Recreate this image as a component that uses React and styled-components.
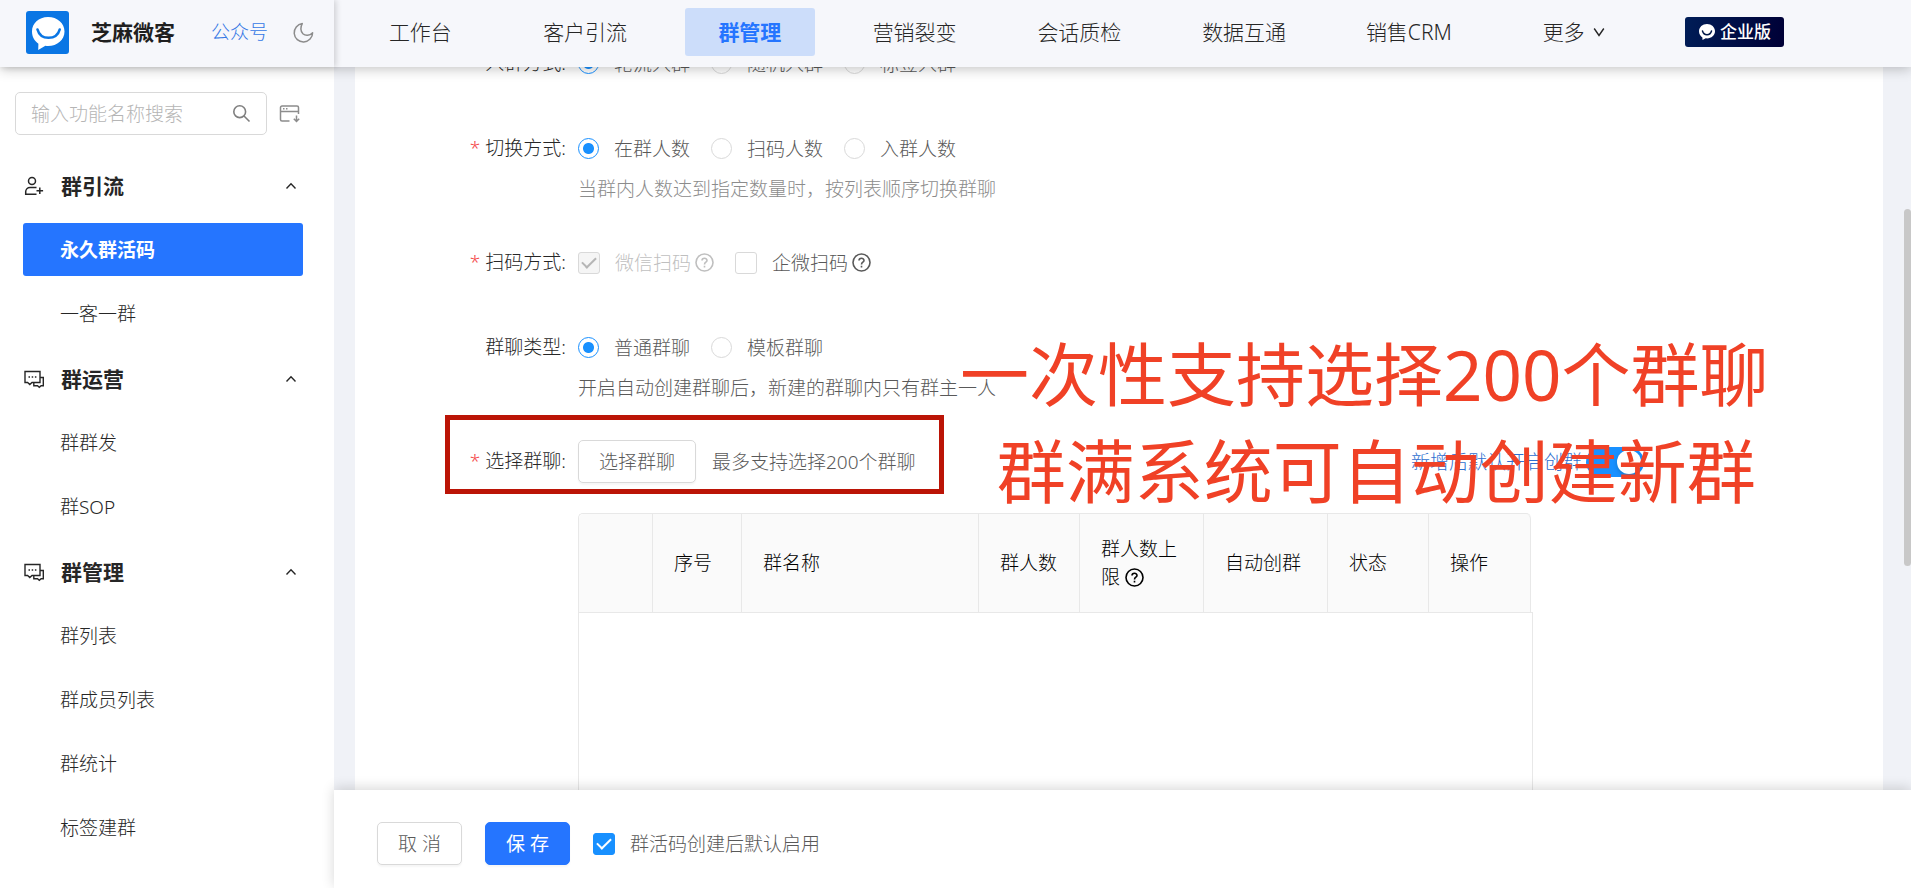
import React, { useState } from "react";
import styled, { createGlobalStyle, css } from 'styled-components'

const GlobalStyle = createGlobalStyle`
  * {
    box-sizing: border-box;
  }
  body {
    margin: 0;
    font-family: "Noto Sans", "Noto Sans CJK SC", sans-serif;
    font-size: 19px;
    font-weight: 300;
    line-height: 28px;
    color: #595959;
    background: #f0f2f7;
  }
  button, input {
    font: inherit;
    color: inherit;
  }
  a {
    color: inherit;
    text-decoration: none;
  }
`

const Page = styled.div`
  display: flex;
  flex-direction: column;
  height: 100vh;
  overflow: hidden;
`

/* ---------- top bar ---------- */

const Header = styled.header`
  display: flex;
  flex: none;
  height: 67px;
  position: relative;
  z-index: 2;
  background: #f6f7fb;
  box-shadow: 0 2px 12px rgba(0, 0, 0, 0.24);
`
const Brand = styled.div`
  display: flex;
  align-items: center;
  flex: 0 0 334px;
  padding: 0 20px 3px 26px;
  box-shadow: 2px 0 6px rgba(0, 0, 0, 0.16);
`
const BrandName = styled.strong`
  margin-left: 22px;
  font-size: 21px;
  font-weight: 700;
  color: #1f1f1f;
`
const AccountLink = styled.a`
  margin: 0 25px 0 36px;
  color: #3478e5;
`
const IconButton = styled.button`
  display: flex;
  padding: 0;
  border: 0;
  background: none;
  color: #8c8c8c;
  cursor: pointer;
`
const Nav = styled.nav`
  display: grid;
  grid-template-columns: repeat(8, 1fr);
  align-items: center;
  flex: 1;
  padding: 0 4px;
`
const NavLink = styled.a`
  display: flex;
  align-items: center;
  justify-content: center;
  gap: 8px;
  height: 48px;
  margin: 0 17px 3px;
  border-radius: 3px;
  font-size: 21px;
  white-space: nowrap;
  color: #262626;
  ${({ $active }) => $active && css`
    background: #ccddfa;
    color: #2575ff;
    font-weight: 700;
  `}
`
const HeaderEnd = styled.div`
  display: flex;
  align-items: center;
  flex: 0 0 251px;
  padding: 0 0 3px 25px;
`
const Edition = styled.span`
  display: flex;
  align-items: center;
  justify-content: center;
  gap: 4px;
  width: 99px;
  height: 30px;
  border-radius: 3px;
  background: linear-gradient(100deg, #001d57, #000036);
  color: #fff;
  font-size: 17px;
  font-weight: 500;
`

/* ---------- sidebar ---------- */

const Body = styled.div`
  display: flex;
  flex: 1;
  min-height: 0;
`
const Sidebar = styled.aside`
  flex: 0 0 334px;
  overflow: hidden;
  background: #fff;
`
const SearchRow = styled.div`
  display: flex;
  align-items: center;
  gap: 12px;
  padding: 25px 0 18px 15px;
`
const SearchBox = styled.label`
  display: flex;
  align-items: center;
  width: 252px;
  height: 43px;
  padding: 0 15px;
  border: 1px solid #d9d9d9;
  border-radius: 5px;
  color: #7f7f7f;
`
const SearchInput = styled.input`
  flex: 1;
  min-width: 0;
  padding: 0;
  border: 0;
  outline: 0;
  background: none;
  &::placeholder {
    color: #b5b5b5;
    opacity: 1;
  }
`
const GroupTitle = styled.button`
  display: flex;
  align-items: center;
  width: 100%;
  height: 65px;
  padding: 0 37px 0 24px;
  border: 0;
  background: none;
  font-size: 21px;
  font-weight: 700;
  color: #262626;
  cursor: pointer;
  span {
    flex: 1;
    margin-left: 17px;
    text-align: left;
  }
`
const MenuList = styled.div`
  display: grid;
  gap: 11px;
  padding: 5px 31px 6px 23px;
`
const MenuLink = styled.a`
  display: flex;
  align-items: center;
  height: 53px;
  padding-left: 37px;
  border-radius: 3px;
  color: #262626;
  ${({ $active }) => $active && css`
    background: #2575ff;
    color: #fff;
    font-weight: 700;
  `}
`

/* ---------- form ---------- */

const Main = styled.main`
  display: flex;
  flex-direction: column;
  flex: 1;
  min-width: 0;
  position: relative;
`
const Scroller = styled.div`
  flex: 1;
  min-height: 0;
  padding: 0 28px 0 21px;
  overflow: hidden;
`
const Card = styled.form`
  display: flow-root;
  position: relative;
  min-height: 100%;
  background: #fff;
`
/* the form is scrolled, so its first row is half under the top bar */
const Rows = styled.div`
  margin-top: -25px;
`
const Row = styled.div`
  display: flex;
  margin-bottom: ${({ $hinted }) => ($hinted ? 33 : 42)}px;
`
const RowLabel = styled.div`
  flex: 0 0 223px;
  padding-right: 12px;
  line-height: 43px;
  text-align: right;
  color: #262626;
`
const Star = styled.span`
  margin-right: 5px;
  color: #f5484c;
`
const Control = styled.div`
  flex: 1;
  min-width: 0;
`
const Line = styled.div`
  display: flex;
  align-items: center;
  height: 43px;
  gap: ${({ $gap }) => $gap || 21}px;
`
const Hint = styled.div`
  line-height: 38px;
  color: ${({ $dark }) => ($dark ? '#595959' : '#8c8c8c')};
`
const Choice = styled.label`
  display: flex;
  align-items: center;
  gap: 15px;
  white-space: nowrap;
  color: ${({ $disabled }) => ($disabled ? '#bfbfbf' : 'inherit')};
`
const WithHelp = styled.span`
  display: flex;
  align-items: center;
  gap: 4px;
`
const Radio = styled.input.attrs({ type: 'radio' })`
  appearance: none;
  width: 21px;
  height: 21px;
  margin: 0;
  border: 1px solid #d9d9d9;
  border-radius: 50%;
  background: #fff;
  &:checked {
    border-color: #1890ff;
    background: radial-gradient(circle, #1890ff 5px, #fff 6px);
  }
`
const Tick = styled.input.attrs({ type: 'checkbox' })`
  appearance: none;
  display: grid;
  place-items: center;
  width: 22px;
  height: 22px;
  margin: 0;
  border: 1px solid #d9d9d9;
  border-radius: 3px;
  background: #fff;
  &:checked::after {
    content: "";
    width: 6px;
    height: 12px;
    margin-top: -3px;
    border: solid #fff;
    border-width: 0 2px 2px 0;
    transform: rotate(45deg);
  }
  &:checked {
    border-color: #1890ff;
    background: #1890ff;
  }
  &:disabled {
    border-color: #d9d9d9;
    background: #f5f5f5;
  }
  &:disabled::after {
    border-color: #b5b5b5;
  }
`
const Button = styled.button`
  height: 43px;
  padding: 0 20px;
  border: 1px solid ${({ $primary }) => ($primary ? '#2575ff' : '#d9d9d9')};
  border-radius: 5px;
  background: ${({ $primary }) => ($primary ? '#2575ff' : '#fff')};
  color: ${({ $primary }) => ($primary ? '#fff' : '#595959')};
  font-weight: ${({ $primary }) => ($primary ? 400 : 300)};
  box-shadow: 0 2px 2px rgba(0, 0, 0, 0.04);
  white-space: nowrap;
  cursor: pointer;
`
const PickLine = styled(Line)`
  max-width: 1066px;
`
const AutoCreate = styled.label`
  display: flex;
  align-items: center;
  gap: 4px;
  margin-left: auto;
  color: #2f6fd0;
`
const Switch = styled.input.attrs({ type: 'checkbox', role: 'switch' })`
  appearance: none;
  display: flex;
  align-items: center;
  width: 58px;
  height: 30px;
  margin: 0;
  padding: 0 3px;
  border-radius: 15px;
  background: #bfbfbf;
  &::after {
    content: "";
    width: 24px;
    height: 24px;
    border-radius: 50%;
    background: #fff;
    box-shadow: 0 2px 4px rgba(0, 35, 11, 0.2);
  }
  &:checked {
    justify-content: flex-end;
    background: #1890ff;
  }
`

/* ---------- table ---------- */

const TableBox = styled.div`
  max-width: 955px;
  margin-top: 30px;
`
const Table = styled.table`
  width: calc(100% - 3px);
  table-layout: fixed;
  border-collapse: separate;
  border-spacing: 0;
  border-top: 1px solid #e8e8e8;
  border-left: 1px solid #e8e8e8;
  border-radius: 5px 5px 0 0;
`
const Th = styled.th`
  width: ${({ $w }) => $w}px;
  height: 98px;
  padding: 0 21px;
  border-right: 1px solid #e8e8e8;
  background: #fafafa;
  color: #000;
  font-weight: 300;
  text-align: left;
  svg {
    margin-left: 5px;
    vertical-align: -3px;
  }
  &:first-child {
    border-top-left-radius: 5px;
  }
  &:last-child {
    border-top-right-radius: 5px;
  }
`
const EmptyArea = styled.div`
  height: 320px;
  border: 1px solid #e8e8e8;
`

/* ---------- bottom bar, scrollbar, notes ---------- */

const Footer = styled.footer`
  display: flex;
  align-items: center;
  flex: none;
  gap: 23px;
  height: 98px;
  padding: 9px 43px 0;
  position: relative;
  background: #fff;
  box-shadow: 0 -2px 12px rgba(0, 0, 0, 0.16);
`
const ScrollThumb = styled.div`
  position: absolute;
  top: 142px;
  right: 0;
  width: 7px;
  height: 357px;
  border-radius: 4px;
  background: #c8c8c8;
`
const Frame = styled.div`
  position: absolute;
  top: 348px;
  left: 90px;
  width: 499px;
  height: 79px;
  border: 5px solid #bb1406;
  pointer-events: none;
`
const Note = styled.div`
  position: absolute;
  top: 259px;
  left: 605px;
  font-size: 69px;
  font-weight: 400;
  line-height: 97px;
  white-space: nowrap;
  text-align: center;
  color: #f04126;
  pointer-events: none;
`
const NoteLine = styled.div`
  padding-left: ${({ $shift }) => ($shift ? 24 : 0)}px;
`

/* ---------- icons ---------- */

const Svg = ({ size = 20, box = 20, stroke = 1.4, children }) => (
  <svg width={size} height={size} viewBox={`0 0 ${box} ${box}`} fill="none"
    stroke="currentColor" strokeWidth={stroke} aria-hidden="true">
    {children}
  </svg>
)

const Logo = () => (
  <svg width="43" height="43" viewBox="0 0 43 43" aria-hidden="true">
    <rect width="43" height="43" rx="3" fill="#0a76e4" />
    <path d="M22 6C12.600 6 6 12.500 6 20.500c0 5.300 2.400 9.400 6.400 12.200L12.200 39l7.200-4.200c.9.100 1.700.2 2.600.2 9.400 0 16.500-6.200 16.500-14.500S31.400 6 22 6z" fill="#fff" />
    <path d="M11.500 18.500c1.500 5.500 5.500 8.300 11 8.300s9.700-2.800 11.200-8.300" fill="none" stroke="#0a76e4" strokeWidth="2.600" strokeLinecap="round" />
  </svg>
)

const BadgeLogo = () => (
  <svg width="18" height="18" viewBox="0 0 18 18" aria-hidden="true">
    <path d="M9 1C4.500 1 1 4.200 1 8.300c0 2.700 1.300 4.800 3.400 6.100L4.500 17l3.200-1.700c.4.100.9.100 1.300.1 4.500 0 8-3 8-7.100S13.500 1 9 1z" fill="#fff" />
    <path d="M4.500 8c.7 2.600 2.300 3.700 4.500 3.700S12.800 10.600 13.500 8" fill="none" stroke="#001848" strokeWidth="1.500" strokeLinecap="round" />
  </svg>
)

const MoonIcon = () => (
  <Svg size={21} box={21} stroke={1.5}>
    <path d="M9.300 1.600A9.200 9.200 0 1 0 19.600 10.700c-3 3.200-7.300 3.200-9.700 1C7.400 9.300 7.200 5 9.300 1.600z" strokeLinejoin="round" />
  </Svg>
)

const SearchIcon = () => (
  <Svg size={19} box={19} stroke={1.6}>
    <circle cx="7.700" cy="7.700" r="5.900" />
    <path d="M12 12l5.500 5.500" />
  </Svg>
)

const PanelIcon = () => (
  <Svg size={21} box={21} stroke={1.5}>
    <path d="M10.500 18H3a1.500 1.500 0 0 1-1.500-1.500v-12A1.500 1.500 0 0 1 3 3h15a1.500 1.500 0 0 1 1.500 1.500V11M1.500 8.500h18M4 5.800h1.500M7 5.800h1.500M17.500 12.500v6M14.800 15.800l2.700 2.700 2.700-2.700" />
  </Svg>
)

const UserIcon = () => (
  <Svg stroke={1.500}>
    <circle cx="8" cy="5" r="3.500" />
    <path d="M12.500 11.500H6a4.300 4.300 0 0 0-4.300 4.300v2.500H12.500M15.800 11.500v6.600M12.500 14.800h6.600" />
  </Svg>
)

const ChatIcon = () => (
  <Svg stroke={1.400}>
    <path d="M1 2.500h15v11H8l-2.200 2-2.200-2H1zM4.500 8H6M7.700 8h1.500M10.900 8h1.500M16 8.500h3.300v8.300h-2.200l-1.800 1.500-1.800-1.500H9.800v-3.300" />
  </Svg>
)

const Chevron = ({ up }) => (
  <Svg size={12} box={12} stroke={1.400}>
    <path d={up ? 'M1.500 8.500L6 3.800l4.500 4.700' : 'M1.200 2.500L6 9.500l4.800-7'} />
  </Svg>
)

const HelpIcon = () => (
  <Svg size={19} box={19} stroke={1.600}>
    <circle cx="9.500" cy="9.500" r="8.500" />
    <path d="M7 7.600c0-3 5-3 5-.2 0 1.800-2.500 1.800-2.500 4M9.500 12.800v1.700" />
  </Svg>
)

/* ---------- data ---------- */

const navItems = ['工作台', '客户引流', '群管理', '营销裂变', '会话质检', '数据互通', '销售CRM', '更多']

const menu = [
  { title: '群引流', Icon: UserIcon, items: ['永久群活码', '一客一群'] },
  { title: '群运营', Icon: ChatIcon, items: ['群群发', '群SOP'] },
  { title: '群管理', Icon: ChatIcon, items: ['群列表', '群成员列表', '群统计', '标签建群'] },
]

const columns = [
  { title: '', width: 74 },
  { title: '序号', width: 89 },
  { title: '群名称', width: 237 },
  { title: '群人数', width: 101 },
  { title: '群人数上限', width: 124, help: true },
  { title: '自动创群', width: 124 },
  { title: '状态', width: 101 },
  { title: '操作', width: 102 },
]

function FormRow({ label, required, hinted, children }) {
  return (
    <Row $hinted={hinted}>
      <RowLabel>{required && <Star>*</Star>}{label}:</RowLabel>
      <Control>{children}</Control>
    </Row>
  )
}

function RadioLine({ name, options }) {
  const [value, setValue] = useState(options[0]);

  return (
    <Line role="radiogroup">
      {options.map((option) => (
        <Choice key={option}>
          <Radio name={name} checked={value === option} onChange={() => setValue(option)} />
          {option}
        </Choice>
      ))}
    </Line>
  )
}

function App() {
  const [activeItem, setActiveItem] = useState('永久群活码');

  return (
    <Page>
      <GlobalStyle />
      <Header>
        <Brand>
          <Logo />
          <BrandName>芝麻微客</BrandName>
          <AccountLink href="#account">公众号</AccountLink>
          <IconButton aria-label="夜间模式"><MoonIcon /></IconButton>
        </Brand>
        <Nav>
          {navItems.map((item) => (
            <NavLink key={item} href="#nav" $active={item === '群管理'}>
              {item}
              {item === '更多' && <Chevron />}
            </NavLink>
          ))}
        </Nav>
        <HeaderEnd>
          <Edition><BadgeLogo />企业版</Edition>
        </HeaderEnd>
      </Header>

      <Body>
        <Sidebar>
          <SearchRow>
            <SearchBox>
              <SearchInput placeholder="输入功能名称搜索" aria-label="输入功能名称搜索" />
              <SearchIcon />
            </SearchBox>
            <IconButton aria-label="收起菜单"><PanelIcon /></IconButton>
          </SearchRow>
          {menu.map(({ title, Icon, items }) => (
            <div key={title}>
              <GroupTitle>
                <Icon />
                <span>{title}</span>
                <Chevron up />
              </GroupTitle>
              <MenuList>
                {items.map((item) => (
                  <MenuLink key={item} href="#menu" $active={item === activeItem} onClick={() => setActiveItem(item)}>
                    {item}
                  </MenuLink>
                ))}
              </MenuList>
            </div>
          ))}
        </Sidebar>

        <Main>
          <Scroller>
            <Card id="code-form" onSubmit={(e) => e.preventDefault()}>
              <Rows>
                <FormRow label="入群方式">
                  <RadioLine name="join" options={['轮流入群', '随机入群', '标签入群']} />
                </FormRow>
                <FormRow label="切换方式" required hinted>
                  <RadioLine name="switch" options={['在群人数', '扫码人数', '入群人数']} />
                  <Hint>当群内人数达到指定数量时，按列表顺序切换群聊</Hint>
                </FormRow>
                <FormRow label="扫码方式" required>
                  <Line>
                    <Choice $disabled>
                      <Tick defaultChecked disabled />
                      <WithHelp>微信扫码<HelpIcon /></WithHelp>
                    </Choice>
                    <Choice>
                      <Tick />
                      <WithHelp>企微扫码<HelpIcon /></WithHelp>
                    </Choice>
                  </Line>
                </FormRow>
                <FormRow label="群聊类型" hinted>
                  <RadioLine name="type" options={['普通群聊', '模板群聊']} />
                  <Hint $dark>开启自动创建群聊后，新建的群聊内只有群主一人</Hint>
                </FormRow>
                <FormRow label="选择群聊" required>
                  <PickLine $gap={16}>
                    <Button type="button">选择群聊</Button>
                    <span>最多支持选择200个群聊</span>
                    <AutoCreate>
                      新增后默认开启创群
                      <Switch defaultChecked />
                    </AutoCreate>
                  </PickLine>
                  <TableBox>
                    <Table>
                      <thead>
                        <tr>
                          {columns.map(({ title, width, help }) => (
                            <Th key={width + title} $w={width} scope="col">
                              {title}
                              {help && <HelpIcon />}
                            </Th>
                          ))}
                        </tr>
                      </thead>
                    </Table>
                    <EmptyArea />
                  </TableBox>
                </FormRow>
              </Rows>
              <Frame />
              <Note>
                <NoteLine>一次性支持选择200个群聊</NoteLine>
                <NoteLine $shift>群满系统可自动创建新群</NoteLine>
              </Note>
            </Card>
          </Scroller>
          <ScrollThumb />
          <Footer>
            <Button type="button">取 消</Button>
            <Button $primary form="code-form">保 存</Button>
            <Choice>
              <Tick defaultChecked />
              群活码创建后默认启用
            </Choice>
          </Footer>
        </Main>
      </Body>
    </Page>
  )
}

export default App
